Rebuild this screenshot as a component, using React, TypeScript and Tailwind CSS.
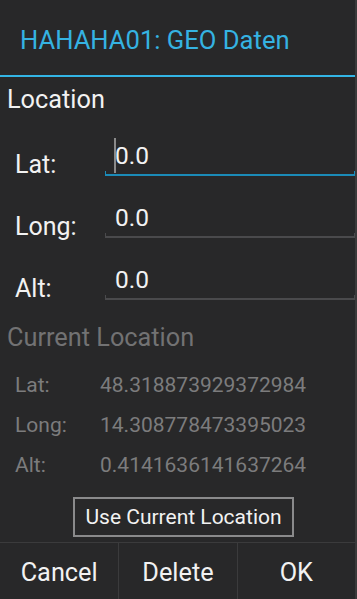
import React from "react";

const font = { fontFamily: "Roboto, 'Noto Sans', sans-serif" };

type Field = { label: string; value: string; focused?: boolean };

const fields: Field[] = [
  { label: "Lat:", value: "0.0", focused: true },
  { label: "Long:", value: "0.0" },
  { label: "Alt:", value: "0.0" },
];

const current = [
  { label: "Lat:", value: "48.318873929372984" },
  { label: "Long:", value: "14.308778473395023" },
  { label: "Alt:", value: "0.4141636141637264" },
];

function EditRow({ label, value, focused }: Field) {
  return (
    <div className="flex h-[62px]">
      <div className="w-[105px] shrink-0 pl-[15px] pt-[35px] text-[25px] leading-[30px] text-[#f2f2f2]">
        {label}
      </div>
      <div className="flex flex-1 flex-col">
        <div className="relative pl-[10px] pt-[26px] text-[24.5px] leading-[30px] text-[#f2f2f2]">
          {focused && (
            <span className="absolute left-[9px] top-[23px] h-[35px] w-[2px] bg-[#8a8a8a]" />
          )}
          {value}
        </div>
        <div
          className={
            focused
              ? "h-[5px] border-x-[1.5px] border-b-2 border-[#1b8bb8]"
              : "h-[5px] border-x border-b-2 border-[#4a4a4c]"
          }
        />
      </div>
    </div>
  );
}

export default function App() {
  return (
    <div className="flex h-[599px] w-[357px] bg-[#282829]" style={font}>
      <div className="flex w-[355px] flex-col">
        {/* title */}
        <div className="h-[75px] pl-[20px] pt-[25px] text-[25.6px] leading-[30px] text-[#35b3e2]">
          HAHAHA01: GEO Daten
        </div>
        <div className="h-[2px] bg-[#33b5e5]" />

        {/* manual entry */}
        <div className="mt-[8px] pl-[7px] text-[25.3px] leading-[30px] text-[#f2f2f2]">Location</div>
        {fields.map((f) => (
          <EditRow key={f.label} {...f} />
        ))}

        {/* current gps */}
        <div className="mt-[22px] pl-[7px] text-[25.3px] leading-[30px] text-[#727273]">
          Current Location
        </div>
        <div className="mt-[12px] flex flex-col">
          {current.map((c) => (
            <div key={c.label} className="flex h-[40px] text-[21px] leading-[40px] text-[#7c7c7d]">
              <div className="w-[100px] shrink-0 pl-[15px]">{c.label}</div>
              <div>{c.value}</div>
            </div>
          ))}
        </div>

        <button className="mt-[12px] ml-[73px] h-[40px] w-[221px] border-2 border-[#8a8a8b] text-[21px] leading-[36px] text-[#f2f2f2]">
          Use Current Location
        </button>

        {/* dialog buttons */}
        <div className="mt-[5px] h-px bg-[#3b3b3c]" />
        <div className="grid flex-1 grid-cols-3">
          {["Cancel", "Delete", "OK"].map((b, i) => (
            <button
              key={b}
              className={
                "flex items-start justify-center self-stretch pt-[15px] text-center text-[25.3px] leading-[30px] text-[#f2f2f2] " +
                (i > 0 ? "border-l border-[#3b3b3c]" : "")
              }
            >
              {b}
            </button>
          ))}
        </div>
      </div>
      <div className="w-[2px] bg-[#3a3a3b]" />
    </div>
  );
}
